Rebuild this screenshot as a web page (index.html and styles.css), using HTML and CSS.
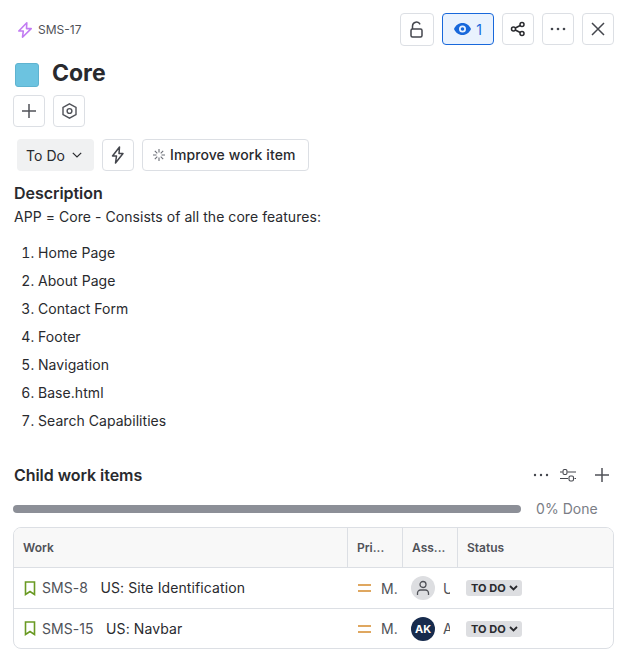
FILE: index.html
```html
<!DOCTYPE html>
<html lang="en">
<head>
    <meta charset="UTF-8">
    <title>SMS-17 Core</title>
    <link rel="stylesheet" href="styles.css">
</head>
<body>
    <div class="top-bar">
        <div class="crumb">
            <svg width="18" height="18" viewBox="0 0 18 18" fill="none" stroke="#c27cf2" stroke-width="1.6" stroke-linejoin="round"><path d="M10.800 1.800 2.800 10h4.500l-.8 6.200L15.200 7.600h-4.700z"/></svg>
            <span>SMS-17</span>
        </div>
        <div class="top-actions">
            <button class="btn btn-lock">
                <svg width="16" height="18" viewBox="0 0 16 18" fill="none" stroke="#44464d" stroke-width="1.5"><path d="M3.500 8V5a4 4 0 0 1 7.600-1.600"/><rect x="2" y="8" width="11" height="8" rx="1.500"/></svg>
            </button>
            <button class="btn btn-watch">
                <svg width="17" height="12" viewBox="0 0 17 12"><path fill="#1868db" fill-rule="evenodd" d="M8.500 0C12.500 0 15.600 2.600 17 6c-1.400 3.400-4.500 6-8.500 6S1.400 9.400 0 6c1.400-3.400 4.500-6 8.500-6zm0 2.500a3.500 3.500 0 1 0 0 7 3.500 3.500 0 0 0 0-7zm0 1.700a1.800 1.800 0 1 1 0 3.600 1.800 1.800 0 0 1 0-3.600z"/></svg>
                <span>1</span>
            </button>
            <button class="btn">
                <svg width="16" height="16" viewBox="0 0 16 16" fill="none" stroke="#292a2e" stroke-width="1.500"><circle cx="12" cy="3.500" r="2"/><circle cx="3.500" cy="8" r="2"/><circle cx="12" cy="12.500" r="2"/><path d="M5.300 7 10.200 4.500M5.300 9l4.900 2.500"/></svg>
            </button>
            <button class="btn">
                <svg width="16" height="4" viewBox="0 0 16 4" fill="#44464d"><circle cx="2" cy="2" r="1.300"/><circle cx="8" cy="2" r="1.300"/><circle cx="14" cy="2" r="1.300"/></svg>
            </button>
            <button class="btn">
                <svg width="14" height="14" viewBox="0 0 14 14" fill="none" stroke="#44464d" stroke-width="1.500"><path d="M1 1l12 12M13 1 1 13"/></svg>
            </button>
        </div>
    </div>

    <div class="title-row">
        <span class="swatch"></span>
        <h1>Core</h1>
    </div>

    <div class="tool-row">
        <button class="btn">
            <svg width="16" height="16" viewBox="0 0 16 16" fill="none" stroke="#505258" stroke-width="1.500"><path d="M8 1v14M1 8h14"/></svg>
        </button>
        <button class="btn">
            <svg width="15" height="16" viewBox="0 0 15 16" fill="none" stroke="#505258" stroke-width="1.400"><path d="M7.500.8 14 4.400v7.200L7.500 15.200 1 11.600V4.400z"/><circle cx="7.500" cy="8" r="2.400"/></svg>
        </button>
    </div>

    <div class="status-row">
        <button class="status-btn">To Do
            <svg width="10" height="6" viewBox="0 0 10 6" fill="none" stroke="#292a2e" stroke-width="1.200"><path d="M.8.800 5 5 9.200.8"/></svg>
        </button>
        <button class="btn">
            <svg width="14" height="18" viewBox="0 0 14 18" fill="none" stroke="#44464d" stroke-width="1.500" stroke-linejoin="round"><path d="M8.500 1 1.500 10h4l-1 7 7.500-9.500H8z"/></svg>
        </button>
        <button class="improve-btn">
            <svg width="14" height="14" viewBox="0 0 14 14" fill="none" stroke="#6b6e76" stroke-width="1.100"><path d="M7 1v3.500M7 9.500V13M1 7h3.500M9.500 7H13M2.800 2.800l2.500 2.500M8.700 8.700l2.500 2.500M11.200 2.800 8.700 5.300M5.300 8.700l-2.500 2.500"/></svg>
            <span>Improve work item</span>
        </button>
    </div>

    <h2 class="desc-head">Description</h2>
    <p class="desc-text">APP = Core - Consists of all the core features:</p>
    <ol class="desc-list">
        <li>Home Page</li>
        <li>About Page</li>
        <li>Contact Form</li>
        <li>Footer</li>
        <li>Navigation</li>
        <li>Base.html</li>
        <li>Search Capabilities</li>
    </ol>

    <div class="child-head">
        <h2>Child work items</h2>
        <div class="child-tools">
            <svg width="16" height="4" viewBox="0 0 16 4" fill="#44464d"><circle cx="2" cy="2" r="1.200"/><circle cx="8" cy="2" r="1.200"/><circle cx="14" cy="2" r="1.200"/></svg>
            <svg class="filter-icon" width="16" height="14" viewBox="0 0 16 14" fill="none" stroke="#44464d" stroke-width="1.100"><path d="M0 4h2.500M7.500 4H16M0 10.500h8M14.500 10.500H16"/><rect x="3" y="1.500" width="4" height="5" rx="1.500"/><rect x="9" y="8" width="4.500" height="5" rx="1.500"/></svg>
            <svg width="14" height="14" viewBox="0 0 14 14" fill="none" stroke="#505258" stroke-width="1.500"><path d="M7 0v14M0 7h14"/></svg>
        </div>
    </div>

    <div class="progress-row">
        <div class="progress-bar"></div>
        <span class="progress-label">0% Done</span>
    </div>

    <div class="work-table">
        <div class="work-row work-head">
            <div class="cell">Work</div>
            <div class="cell">Pri...</div>
            <div class="cell">Ass...</div>
            <div class="cell">Status</div>
        </div>
        <div class="work-row">
            <div class="cell cell-work">
                <svg class="story" width="12" height="15" viewBox="0 0 12 15" fill="none" stroke="#6a9a23" stroke-width="1.600"><path d="M1.500 1h9v12.500L6 10.500l-4.500 3z"/></svg>
                <span class="key">SMS-8</span>
                <span class="summary">US: Site Identification</span>
            </div>
            <div class="cell cell-pri">
                <svg width="13" height="8" viewBox="0 0 13 8" fill="none" stroke="#d58a2d" stroke-width="1.500"><path d="M0 1h13M0 7h13"/></svg>
                <span>M.</span>
            </div>
            <div class="cell cell-user">
                <span class="avatar avatar-none">
                    <svg width="14" height="16" viewBox="0 0 14 16" fill="none" stroke="#505258" stroke-width="1.300"><circle cx="7" cy="4.500" r="3"/><path d="M1.500 15v-2a3 3 0 0 1 3-3h5a3 3 0 0 1 3 3v2"/></svg>
                </span>
                <span class="user-name">U</span>
            </div>
            <div class="cell">
                <span class="lozenge">TO DO
                    <svg width="9" height="6" viewBox="0 0 9 6" fill="none" stroke="#292a2e" stroke-width="1.800"><path d="M1 1l3.500 3.500L8 1"/></svg>
                </span>
            </div>
        </div>
        <div class="work-row">
            <div class="cell cell-work">
                <svg class="story" width="12" height="15" viewBox="0 0 12 15" fill="none" stroke="#6a9a23" stroke-width="1.600"><path d="M1.500 1h9v12.500L6 10.500l-4.500 3z"/></svg>
                <span class="key">SMS-15</span>
                <span class="summary">US: Navbar</span>
            </div>
            <div class="cell cell-pri">
                <svg width="13" height="8" viewBox="0 0 13 8" fill="none" stroke="#d58a2d" stroke-width="1.500"><path d="M0 1h13M0 7h13"/></svg>
                <span>M.</span>
            </div>
            <div class="cell cell-user">
                <span class="avatar avatar-ak">AK</span>
                <span class="user-name">A</span>
            </div>
            <div class="cell">
                <span class="lozenge">TO DO
                    <svg width="9" height="6" viewBox="0 0 9 6" fill="none" stroke="#292a2e" stroke-width="1.800"><path d="M1 1l3.500 3.500L8 1"/></svg>
                </span>
            </div>
        </div>
    </div>
</body>
</html>
```

FILE: styles.css
```css
body {
    margin: 0;
    padding: 13px 16px 0 13px;
    background-color: #fff;
    color: #292a2e;
    font-family: Inter, "Liberation Sans", sans-serif;
    font-size: 14px;
    letter-spacing: 0.05px;
}

button {
    font-family: inherit;
    letter-spacing: inherit;
    color: inherit;
    cursor: pointer;
}

.btn {
    display: flex;
    align-items: center;
    justify-content: center;
    box-sizing: border-box;
    width: 32px;
    height: 32px;
    padding: 0;
    background-color: #fff;
    border: 1px solid #dcdfe4;
    border-radius: 4px;
}

.top-bar {
    display: flex;
    align-items: center;
    justify-content: space-between;
}

.crumb {
    display: flex;
    align-items: center;
    gap: 4px;
    padding-left: 3px;
    font-size: 12px;
    letter-spacing: 0;
    color: #505258;
}

.top-actions {
    display: flex;
    align-items: flex-start;
    gap: 8px;
}

.btn-lock {
    width: 34px;
    height: 33px;
}

.btn-watch {
    width: 52px;
    gap: 5px;
    background-color: #e9f2fe;
    border-color: #1868db;
    color: #1868db;
    font-size: 14px;
}

.title-row {
    display: flex;
    align-items: flex-start;
    gap: 13px;
    padding: 12px 0 0 2px;
}

.swatch {
    box-sizing: border-box;
    width: 24px;
    height: 24px;
    margin-top: 5px;
    background-color: #6cc3e0;
    border: 1px solid #5fb3d0;
    border-radius: 3px;
}

h1 {
    margin: 0;
    font-size: 23px;
    line-height: 30px;
    font-weight: 700;
    letter-spacing: 0;
}

.tool-row {
    display: flex;
    gap: 8px;
    padding-top: 7px;
}

.status-row {
    display: flex;
    gap: 8px;
    padding: 12px 0 0 4px;
}

.status-btn {
    display: flex;
    align-items: center;
    gap: 7px;
    box-sizing: border-box;
    width: 77px;
    height: 32px;
    padding: 0 0 0 9px;
    background-color: #f0f1f2;
    border: 0;
    border-radius: 4px;
    font-size: 14px;
}

.improve-btn {
    display: flex;
    align-items: center;
    gap: 4px;
    box-sizing: border-box;
    width: 167px;
    height: 32px;
    padding: 0 0 0 9px;
    background-color: #fff;
    border: 1px solid #dcdfe4;
    border-radius: 4px;
    font-size: 14px;
    font-weight: 500;
    letter-spacing: 0.1px;
}

.improve-btn span {
    padding-bottom: 1px;
}

h2 {
    margin: 0;
    font-size: 16px;
    line-height: 20px;
    font-weight: 600;
    letter-spacing: -0.05px;
}

.desc-head {
    margin: 12px 0 0 1px;
}

.desc-text {
    margin: 4px 0 0 1px;
    line-height: 20px;
}

.desc-list {
    margin: 16px 0 0;
    padding: 0 0 0 25px;
}

.desc-list li {
    line-height: 20px;
    margin-bottom: 8px;
}

.child-head {
    display: flex;
    align-items: center;
    justify-content: space-between;
    margin: 34px 0 0 1px;
}

.child-tools {
    display: flex;
    align-items: center;
    gap: 11px;
    padding-right: 5px;
}

.filter-icon {
    margin-right: 8px;
}

.progress-row {
    display: flex;
    align-items: center;
    gap: 15px;
    margin-top: 14px;
}

.progress-bar {
    width: 508px;
    height: 8px;
    background-color: #8c8f97;
    border-radius: 4px;
}

.progress-label {
    color: #7a7d85;
    line-height: 20px;
}

.work-table {
    margin-top: 8px;
    border: 1px solid #dcdfe4;
    border-radius: 8px;
    overflow: hidden;
}

.work-row {
    display: grid;
    grid-template-columns: 334px 55px 55px 1fr;
    height: 40px;
    border-top: 1px solid #dcdfe4;
}

.work-row:last-child {
    height: 39px;
}

.work-head {
    height: 39px;
    border-top: 0;
    background-color: #f8f8f8;
    color: #505258;
    font-size: 12px;
    font-weight: 600;
    letter-spacing: 0;
}

.work-head .cell {
    padding: 0 0 1px 9px;
    border-right: 1px solid #dcdfe4;
}

.work-head .cell:last-child {
    border-right: 0;
}

.cell {
    display: flex;
    align-items: center;
    overflow: hidden;
    white-space: nowrap;
    padding-left: 8px;
}

.cell-work {
    padding-left: 10px;
}

.cell-work span {
    padding-bottom: 1px;
}

.story {
    flex-shrink: 0;
    margin-right: 6px;
}

.key {
    margin-right: 12.5px;
    color: #505258;
}

.summary {
    letter-spacing: 0.1px;
}

.cell-pri {
    gap: 10px;
    padding-left: 10px;
    color: #505258;
}

.cell-user {
    gap: 8px;
    color: #505258;
}

.avatar {
    display: flex;
    align-items: center;
    justify-content: center;
    flex-shrink: 0;
    width: 24px;
    height: 24px;
    border-radius: 50%;
}

.avatar-none {
    background-color: #dddee1;
}

.avatar-ak {
    background-color: #172b4d;
    color: #fff;
    font-size: 11px;
    font-weight: 700;
}

.user-name {
    width: 7px;
    overflow: hidden;
}

.lozenge {
    display: flex;
    align-items: center;
    gap: 3px;
    height: 16px;
    padding: 0 4px 0 5px;
    background-color: #dddee1;
    border-radius: 3px;
    font-size: 11px;
    font-weight: 700;
}
```
